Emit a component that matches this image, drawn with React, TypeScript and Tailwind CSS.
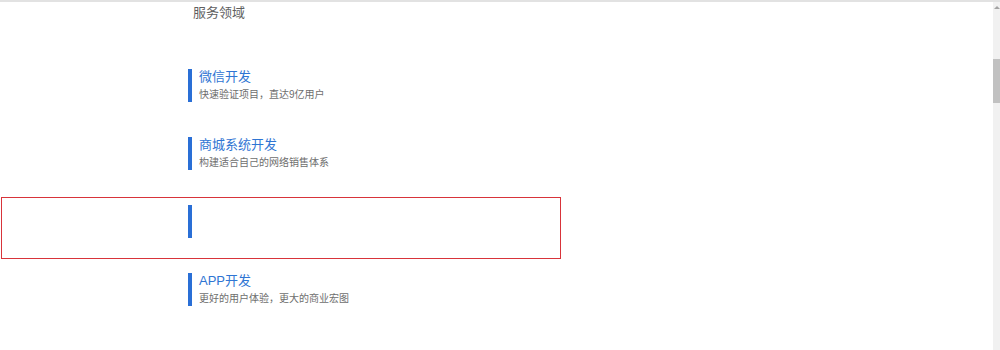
import React from "react";

const items = [
  { title: "微信开发", desc: "快速验证项目，直达9亿用户", active: false },
  { title: "商城系统开发", desc: "构建适合自己的网络销售体系", active: false },
  { title: "", desc: "", active: true },
  { title: "APP开发", desc: "更好的用户体验，更大的商业宏图", active: false },
];

export default function App() {
  return (
    <div
      className="w-[1000px] h-[350px] bg-white flex flex-col overflow-hidden"
      style={{ fontFamily: '"Liberation Sans", "Noto Sans CJK SC", sans-serif' }}
    >
      <div className="h-[2px] bg-[#e2e2e2] shrink-0" />
      <div className="flex flex-1 min-h-0">
        <div className="flex-1 flex flex-col">
          <div className="pl-[193px] pt-[2px] text-[13px] leading-[17px] text-[#5f5f5f]">服务领域</div>
          <div className="mt-[40px] flex flex-col gap-[6px]">
            {items.map((it, i) => (
              <div
                key={i}
                className={
                  "ml-[1px] w-[560px] h-[62px] border pl-[186px] pt-[7px] flex " +
                  (it.active ? "border-[#d8343a]" : "border-transparent")
                }
              >
                <div className="w-[4px] h-[33px] bg-[#2a6fd6] shrink-0" />
                <div className="ml-[7px] flex flex-col">
                  <div className="text-[13px] leading-[15px] text-[#2f75d3] whitespace-nowrap">{it.title}</div>
                  <div className="mt-[4px] text-[10px] leading-[14px] text-[#6e6e6e] whitespace-nowrap">{it.desc}</div>
                </div>
              </div>
            ))}
          </div>
        </div>
        <div className="w-[7px] bg-[#f1f1f1] flex flex-col items-center shrink-0">
          <div className="mt-[4px] w-0 h-0 border-l-[3px] border-r-[3px] border-b-[3px] border-l-transparent border-r-transparent border-b-[#a3a3a3]" />
          <div className="mt-[50px] w-[7px] h-[44px] bg-[#c1c1c1]" />
        </div>
      </div>
    </div>
  );
}
